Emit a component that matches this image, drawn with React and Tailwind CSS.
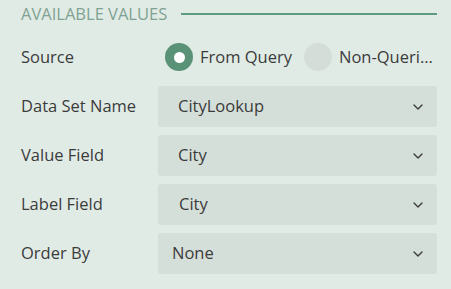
import { ChevronDown } from "lucide-react";

const fields = [
  { label: "Data Set Name", value: "CityLookup", pad: "pl-[20px]" },
  { label: "Value Field", value: "City", pad: "pl-[20px]" },
  { label: "Label Field", value: "City", pad: "pl-[21px]" },
  { label: "Order By", value: "None", pad: "pl-[14px]" },
];

function App() {
  return (
    <div
      className="w-[451px] h-[289px] bg-[#e1ebe6] pl-[21px] pr-[14px] pt-[5px] text-[#3b3b3b] text-[16.5px]"
      style={{ fontFamily: '"Open Sans", sans-serif' }}
    >
      {/* Section header */}
      <div className="flex items-center h-[18px]">
        <span className="text-[#7fa292] leading-none">AVAILABLE VALUES</span>
        <div className="flex-1 h-[1.5px] bg-[#5f9a80] ml-[14px]" />
      </div>

      {/* Source */}
      <div className="flex items-center h-[30px] mt-[19px]">
        <span className="w-[144px]">Source</span>
        <div className="flex items-center">
          <div className="w-[28px] h-[28px] rounded-full bg-[#5a9278] flex items-center justify-center">
            <div className="w-[11px] h-[11px] rounded-full bg-white" />
          </div>
          <span className="ml-[7px]">From Query</span>
          <div className="w-[28px] h-[28px] rounded-full bg-[#d5ddd8] ml-[12px]" />
          <span className="ml-[7px]">Non-Queri...</span>
        </div>
      </div>

      {/* Selects */}
      <div className="flex flex-col gap-[8px] mt-[14px]">
        {fields.map((f) => (
          <div key={f.label} className="flex items-center">
            <span className="w-[137px]">{f.label}</span>
            <div className={`flex-1 h-[41px] rounded-[3px] bg-[#d5dfd9] flex items-center justify-between pr-[11px] ${f.pad}`}>
              <span>{f.value}</span>
              <ChevronDown size={16} strokeWidth={2} className="text-[#3b3b3b]" />
            </div>
          </div>
        ))}
      </div>
    </div>
  );
}

export default App;
